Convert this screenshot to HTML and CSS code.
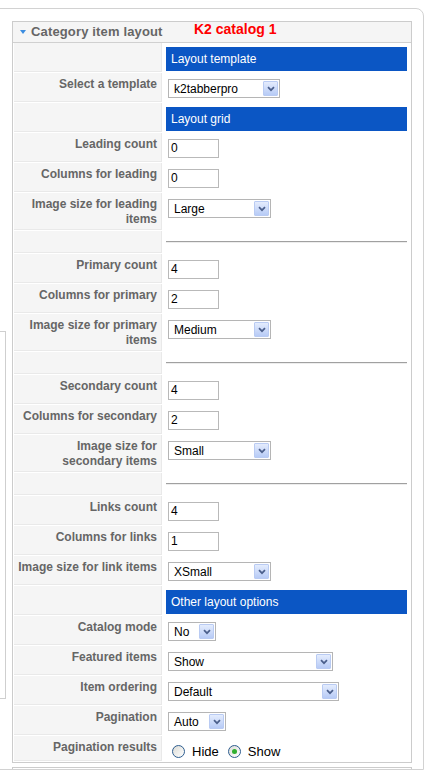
FILE: index.html
```html
<!DOCTYPE html>
<html lang="en">
  <head>
    <meta charset="utf-8">
    <title>Category item layout</title>
    <link rel="stylesheet" href="styles.css">
  </head>
  <body>
  <div class="side-box"></div>

  <div class="pane">
    <div class="panel">
      <h3 class="panel-title">
        <span class="toggle"></span>
        <span class="title-text">Category item layout</span>
        <span class="note">K2 catalog 1</span>
      </h3>

      <table class="params">
        <tr>
          <td class="key"></td>
          <td class="bar-cell"><div class="bar">Layout template</div></td>
        </tr>
        <tr>
          <td class="key">Select a template</td>
          <td class="field">
            <span class="select select-template"><span class="select-value">k2tabberpro</span><span class="select-btn"><svg width="8" height="6" viewBox="0 0 8 6"><path d="M1 1.2 L4 4.2 L7 1.2" fill="none" stroke="#4b5f8c" stroke-width="1.7"/></svg></span></span>
          </td>
        </tr>
        <tr>
          <td class="key"></td>
          <td class="bar-cell"><div class="bar">Layout grid</div></td>
        </tr>
        <tr>
          <td class="key">Leading count</td>
          <td class="field"><span class="input">0</span></td>
        </tr>
        <tr>
          <td class="key">Columns for leading</td>
          <td class="field"><span class="input">0</span></td>
        </tr>
        <tr>
          <td class="key">Image size for leading items</td>
          <td class="field">
            <span class="select select-size"><span class="select-value">Large</span><span class="select-btn"><svg width="8" height="6" viewBox="0 0 8 6"><path d="M1 1.2 L4 4.2 L7 1.2" fill="none" stroke="#4b5f8c" stroke-width="1.7"/></svg></span></span>
          </td>
        </tr>
        <tr>
          <td class="key"></td>
          <td class="rule-cell"><hr></td>
        </tr>
        <tr>
          <td class="key">Primary count</td>
          <td class="field"><span class="input">4</span></td>
        </tr>
        <tr>
          <td class="key">Columns for primary</td>
          <td class="field"><span class="input">2</span></td>
        </tr>
        <tr>
          <td class="key">Image size for primary items</td>
          <td class="field">
            <span class="select select-size"><span class="select-value">Medium</span><span class="select-btn"><svg width="8" height="6" viewBox="0 0 8 6"><path d="M1 1.2 L4 4.2 L7 1.2" fill="none" stroke="#4b5f8c" stroke-width="1.7"/></svg></span></span>
          </td>
        </tr>
        <tr>
          <td class="key"></td>
          <td class="rule-cell"><hr></td>
        </tr>
        <tr>
          <td class="key">Secondary count</td>
          <td class="field"><span class="input">4</span></td>
        </tr>
        <tr>
          <td class="key">Columns for secondary</td>
          <td class="field"><span class="input">2</span></td>
        </tr>
        <tr>
          <td class="key">Image size for secondary items</td>
          <td class="field">
            <span class="select select-size"><span class="select-value">Small</span><span class="select-btn"><svg width="8" height="6" viewBox="0 0 8 6"><path d="M1 1.2 L4 4.2 L7 1.2" fill="none" stroke="#4b5f8c" stroke-width="1.7"/></svg></span></span>
          </td>
        </tr>
        <tr>
          <td class="key"></td>
          <td class="rule-cell"><hr></td>
        </tr>
        <tr>
          <td class="key">Links count</td>
          <td class="field"><span class="input">4</span></td>
        </tr>
        <tr>
          <td class="key">Columns for links</td>
          <td class="field"><span class="input">1</span></td>
        </tr>
        <tr>
          <td class="key">Image size for link items</td>
          <td class="field">
            <span class="select select-size"><span class="select-value">XSmall</span><span class="select-btn"><svg width="8" height="6" viewBox="0 0 8 6"><path d="M1 1.2 L4 4.2 L7 1.2" fill="none" stroke="#4b5f8c" stroke-width="1.7"/></svg></span></span>
          </td>
        </tr>
        <tr>
          <td class="key"></td>
          <td class="bar-cell"><div class="bar">Other layout options</div></td>
        </tr>
        <tr>
          <td class="key">Catalog mode</td>
          <td class="field">
            <span class="select select-yesno"><span class="select-value">No</span><span class="select-btn"><svg width="8" height="6" viewBox="0 0 8 6"><path d="M1 1.2 L4 4.2 L7 1.2" fill="none" stroke="#4b5f8c" stroke-width="1.7"/></svg></span></span>
          </td>
        </tr>
        <tr>
          <td class="key">Featured items</td>
          <td class="field">
            <span class="select select-featured"><span class="select-value">Show</span><span class="select-btn"><svg width="8" height="6" viewBox="0 0 8 6"><path d="M1 1.2 L4 4.2 L7 1.2" fill="none" stroke="#4b5f8c" stroke-width="1.7"/></svg></span></span>
          </td>
        </tr>
        <tr>
          <td class="key">Item ordering</td>
          <td class="field">
            <span class="select select-order"><span class="select-value">Default</span><span class="select-btn"><svg width="8" height="6" viewBox="0 0 8 6"><path d="M1 1.2 L4 4.2 L7 1.2" fill="none" stroke="#4b5f8c" stroke-width="1.7"/></svg></span></span>
          </td>
        </tr>
        <tr>
          <td class="key">Pagination</td>
          <td class="field">
            <span class="select select-paging"><span class="select-value">Auto</span><span class="select-btn"><svg width="8" height="6" viewBox="0 0 8 6"><path d="M1 1.2 L4 4.2 L7 1.2" fill="none" stroke="#4b5f8c" stroke-width="1.7"/></svg></span></span>
          </td>
        </tr>
        <tr>
          <td class="key">Pagination results</td>
          <td class="radio-cell">
            <span class="radio"></span><span class="radio-label">Hide</span>
            <span class="radio checked"></span><span class="radio-label">Show</span>
          </td>
        </tr>
      </table>
    </div>

    <div class="panel panel-next"></div>
  </div>

  </body>
</html>
```

FILE: styles.css
```css
html {
  height: 100%;
}
body {
  margin: 0;
  padding: 0;
  background: #ffffff;
  color: #333;
  font-family: "Liberation Sans", Arial, sans-serif;
  font-size: 12px;
  overflow: hidden;
}

.side-box {
  position: absolute;
  left: -20px;
  top: 331px;
  width: 24px;
  height: 366px;
  border: 1px solid #cfcfcf;
}

.pane {
  width: 400px;
  margin: 8px 0 0 -10px;
  padding: 12px 11px 0 21px;
  border: 1px solid #d2d2d2;
  border-top-right-radius: 8px;
}

.panel {
  border: 1px solid #cccccc;
  background: #fff;
}

.panel-next {
  margin-top: 4px;
  height: 1px;
  border-bottom: 0;
}

.panel-title {
  display: flex;
  align-items: flex-start;
  margin: 0;
  height: 20px;
  padding-left: 7px;
  background: #f5f5f5;
  border-bottom: 1px solid #d0d0d0;
  font-size: 13px;
  line-height: 20px;
  font-weight: bold;
  color: #666;
}

.toggle {
  width: 0;
  height: 0;
  margin: 8px 5px 0 0;
  border-left: 3.5px solid transparent;
  border-right: 3.5px solid transparent;
  border-top: 4px solid #3b8de0;
}

.title-text {
  width: 163px;
  letter-spacing: 0.15px;
}

.note {
  margin-top: -1px;
  font-size: 14px;
  line-height: 16px;
  color: #ff0000;
}

.params {
  width: 100%;
  margin-top: -1px;
  border-spacing: 1px;
}

.params td {
  padding: 0;
  vertical-align: top;
}

.params td.key {
  width: 139px;
  padding: 4px 4px 2px;
  background: #f5f5f5;
  border-bottom: 1px solid #e9e9e9;
  border-right: 1px solid #e9e9e9;
  text-align: right;
  font-weight: bold;
  color: #666;
  line-height: 15px;
}

.params td.bar-cell {
  padding: 4px 3px 1px;
}

.bar {
  height: 24px;
  padding-left: 5px;
  background: #0b56c4;
  color: #fff;
  line-height: 24px;
}

.params td.field {
  padding: 6px 3px 4px 5px;
}

.params td.rule-cell {
  padding: 10px 3px;
}

hr {
  height: 0;
  margin: 0;
  border: 0;
  border-top: 1px solid #a0a0a0;
  border-bottom: 1px solid #ededed;
}

.input {
  display: block;
  box-sizing: border-box;
  width: 51px;
  height: 19px;
  padding-left: 2px;
  border: 1px solid #b9b9b9;
  line-height: 17px;
  color: #000;
}

.select {
  display: flex;
  align-items: center;
  justify-content: space-between;
  box-sizing: border-box;
  height: 19px;
  padding: 0 1px 0 5px;
  border: 1px solid #b5b5b5;
  color: #000;
}
.select-template { width: 112px; }
.select-size { width: 103px; }
.select-yesno { width: 48px; }
.select-featured { width: 165px; }
.select-order { width: 171px; }
.select-paging { width: 58px; }

.select-btn {
  display: flex;
  align-items: center;
  justify-content: center;
  box-sizing: border-box;
  width: 15px;
  height: 15px;
  border: 1px solid #b9cbf3;
  border-radius: 1px;
  background: linear-gradient(#e4ecfd, #b7cbf6);
}

.params td.radio-cell {
  display: flex;
  align-items: center;
  height: 15px;
  padding: 8px 3px 2px 9px;
  color: #000;
  font-size: 13px;
}

.radio {
  position: relative;
  width: 11px;
  height: 11px;
  border: 1px solid #2d5d8f;
  border-radius: 50%;
  background: linear-gradient(135deg, #dcdcd6, #ffffff);
}
.radio.checked::after {
  content: "";
  position: absolute;
  left: 3px;
  top: 3px;
  width: 5px;
  height: 5px;
  border-radius: 50%;
  background: #2fae2f;
}

.radio-label {
  margin: 0 9px 0 7px;
}
```
